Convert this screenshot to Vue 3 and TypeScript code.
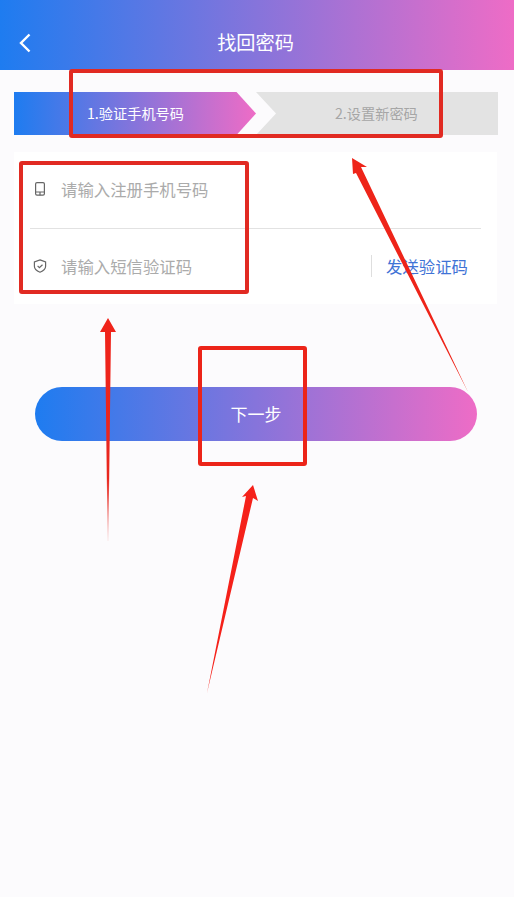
<script setup lang="ts">
const title: string = '找回密码'
</script>

<template>
  <div class="page">
    <header class="nav">
      <svg class="back" width="14" height="22" viewBox="0 0 14 22"><path d="M11.5 2.5 3 11l8.5 8.5" fill="none" stroke="#fff" stroke-width="2.4" /></svg>
      <h1 class="title">{{ title }}</h1>
    </header>

    <div class="steps">
      <div class="step one">1.验证手机号码</div>
      <div class="step two">2.设置新密码</div>
    </div>

    <section class="form">
      <div class="row">
        <svg class="icon" width="14" height="16" viewBox="0 0 14 16" fill="none" stroke="#666" stroke-width="1.2">
          <rect x="2.6" y="1.6" width="8.8" height="12.6" rx="1.4" />
          <path d="M2.6 11h8.8M7 11v3.2" />
        </svg>
        <span class="placeholder">请输入注册手机号码</span>
      </div>
      <div class="row second">
        <svg class="icon" width="14" height="16" viewBox="0 0 14 16" fill="none" stroke="#666" stroke-width="1.2">
          <path d="M7 1.9 12.6 4v4.2c0 2.8-2.4 4.8-5.6 6-3.2-1.2-5.6-3.2-5.6-6V4L7 1.9Z" />
          <path d="m4.6 7.9 1.8 1.8 3.1-3" />
        </svg>
        <span class="placeholder">请输入短信验证码</span>
        <span class="send">发送验证码</span>
      </div>
    </section>

    <button class="next" type="button">下一步</button>

    <!-- Red review annotations drawn on top of the screen -->
    <i class="mark mark-steps"></i>
    <i class="mark mark-form"></i>
    <i class="mark mark-next"></i>
    <svg class="arrows" width="514" height="897" viewBox="0 0 514 897">
      <defs>
        <linearGradient id="fade" x1="0" y1="0" x2="0" y2="1">
          <stop offset="0" stop-color="#f0231a" />
          <stop offset="0.72" stop-color="#e8261e" />
          <stop offset="1" stop-color="#e8261e" stop-opacity="0.1" />
        </linearGradient>
      </defs>
      <polygon points="352,158 367,167 361,167 468,392 356,173 353,174" fill="#ee2419" />
      <polygon points="108,318 116,332 111,332 108.4,541 107.6,541 105,332 100,332" fill="url(#fade)" />
      <polygon points="253,485 258,501 253,498 207,693 246,496 242,497" fill="#f5211a" />
    </svg>
  </div>
</template>

<style scoped>
.page {
  position: relative;
  width: 514px;
  height: 897px;
  overflow: hidden;
  background: #fcfbfd;
  font-family: "Noto Sans CJK SC", "Noto Sans", sans-serif;
}
.nav {
  height: 70px;
  display: flex;
  align-items: center;
  justify-content: center;
  position: relative;
  padding: 14px 3px 0 0;
  box-sizing: border-box;
  background: linear-gradient(90deg, #1e7cf0, #ee6cc6);
}
.back {
  position: absolute;
  left: 18px;
  top: 32px;
}
.title {
  margin: 0;
  font-size: 19.2px;
  line-height: 28px;
  font-weight: 400;
  color: #fff;
}
.steps {
  display: grid;
  grid-template-columns: 242px 242px;
  margin: 22px 16px 0 14px;
  height: 43px;
}
.step {
  font-size: 14.2px;
  line-height: 43px;
}
.one {
  padding-left: 73px;
  color: #fff;
  background: linear-gradient(90deg, #1e7cf0, #ee6cc6);
  clip-path: polygon(0 0, 222.5px 0, 100% 50%, 222.5px 100%, 0 100%);
}
.two {
  padding-left: 79px;
  color: #a6a6a6;
  background: #e3e3e3;
  clip-path: polygon(0 0, 100% 0, 100% 100%, 0 100%, 20px 50%);
}
.form {
  margin: 17px 17px 0 14px;
  padding: 0 16px;
  background: #fff;
}
.row {
  height: 77px;
  padding-bottom: 2px;
  display: flex;
  align-items: center;
  border-bottom: 1px solid #e2e2e2;
  box-sizing: border-box;
}
.second {
  height: 75px;
  padding-bottom: 1px;
  border-bottom: 0;
}
.icon {
  flex: none;
  margin-right: 14px;
  margin-left: 3px;
}
.placeholder {
  flex: 1;
  font-size: 16.4px;
  line-height: 24px;
  color: #ababab;
}
.send {
  margin-right: 13px;
  padding-left: 14px;
  border-left: 1px solid #dedede;
  font-size: 16.4px;
  line-height: 22px;
  color: #3f73d6;
}
.next {
  display: block;
  width: 442px;
  height: 54px;
  margin: 83px 0 0 35px;
  padding: 0 0 2px;
  border: 0;
  border-radius: 27px;
  color: #fff;
  font: inherit;
  font-size: 17px;
  background: linear-gradient(90deg, #1e7cf0, #ee6cc6);
}
.mark {
  position: absolute;
  box-sizing: border-box;
  border: 4px solid #e12a22;
  border-radius: 3px;
}
.mark-steps {
  left: 69px;
  top: 69px;
  width: 374px;
  height: 69px;
}
.mark-form {
  left: 19px;
  top: 161px;
  width: 230px;
  height: 133px;
}
.mark-next {
  left: 198px;
  top: 346px;
  width: 109px;
  height: 120px;
  border-color: #ec2419;
}
.arrows {
  position: absolute;
  left: 0;
  top: 0;
  pointer-events: none;
}
</style>
